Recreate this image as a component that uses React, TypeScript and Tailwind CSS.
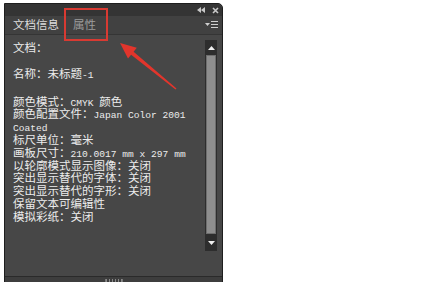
import React from 'react';

// Illustrator-style "文档信息" panel with a red annotation
const cjk = "font-['Noto_Sans_CJK_SC','Noto_Sans_CJK_JP',sans-serif]";
const mono = "font-['Liberation_Mono',monospace] text-[9.6px]";

function Line({ children }: { children: React.ReactNode }) {
  return <div className="h-[12.8px] leading-[12.8px] whitespace-nowrap">{children}</div>;
}

export default function App() {
  return (
    <div className={`relative w-[435px] h-[282px] overflow-hidden bg-white pl-[4px] pt-[3px] ${cjk}`}>
      <div className="flex h-[290px] w-[219px] flex-col rounded-tr-[5px] border border-[#1e1e1e] bg-[#474747]">
        {/* title bar */}
        <div className="flex h-[12px] items-center justify-end gap-[7px] rounded-tr-[5px] bg-[#343434] pr-[3px]">
          <svg width="8" height="6" viewBox="0 0 8 6">
            <path d="M4 0 L0 3 L4 6 Z M8 0 L4 3 L8 6 Z" fill="#c8c8c8" />
          </svg>
          <svg width="7" height="7" viewBox="0 0 7 7">
            <path d="M1 1 L6 6 M6 1 L1 6" stroke="#c8c8c8" strokeWidth="1.6" />
          </svg>
        </div>
        {/* tab row */}
        <div className="flex h-[19px] items-center border-b border-[#353535] bg-[#414141] pl-[8px] pr-[4px] text-[11.5px]">
          <span className="text-[#dcdcdc]">文档信息</span>
          <span className="ml-[14px] text-[#9c9c9c]">属性</span>
          <svg className="ml-auto" width="13" height="8" viewBox="0 0 13 8">
            <path d="M0 2 L5 2 L2.5 5 Z" fill="#d0d0d0" />
            <path d="M6 0.5 H13 M6 3.5 H13 M6 6.5 H13" stroke="#d0d0d0" strokeWidth="1" />
          </svg>
        </div>
        {/* content */}
        <div className="flex h-[242px] border-b border-[#2a2a2a]">
          <div className="flex-1 pl-[8px] pt-[6px] text-[11.5px] text-[#ececec]">
            <Line>文档：</Line>
            <div className="h-[13px]" />
            <Line>
              名称：未标题<span className={mono}>-1</span>
            </Line>
            <div className="h-[15px]" />
            <Line>
              颜色模式：<span className={mono}>CMYK </span>颜色
            </Line>
            <Line>
              颜色配置文件：<span className={mono}>Japan Color 2001</span>
            </Line>
            <Line>
              <span className={mono}>Coated</span>
            </Line>
            <Line>标尺单位：毫米</Line>
            <Line>
              画板尺寸：<span className={mono}>210.0017 mm x 297 mm</span>
            </Line>
            <Line>以轮廓模式显示图像：关闭</Line>
            <Line>突出显示替代的字体：关闭</Line>
            <Line>突出显示替代的字形：关闭</Line>
            <Line>保留文本可编辑性</Line>
            <Line>模拟彩纸：关闭</Line>
          </div>
          {/* scrollbar */}
          <div className="mr-[5px] mt-[5px] flex h-[211px] w-[12px] flex-col bg-[#2d2d2d]">
            <div className="flex h-[15px] items-center justify-center">
              <svg width="7" height="4" viewBox="0 0 7 4">
                <path d="M0 4 L3.5 0 L7 4 Z" fill="#f0f0f0" />
              </svg>
            </div>
            <div className="mx-[1px] flex-1 border border-[#6e6e6e] bg-[#8e8e8e]" />
            <div className="flex h-[17px] items-center justify-center">
              <svg width="7" height="4" viewBox="0 0 7 4">
                <path d="M0 0 L3.5 4 L7 0 Z" fill="#f0f0f0" />
              </svg>
            </div>
          </div>
        </div>
        {/* bottom bar */}
        <div className="flex h-[14px] justify-center bg-[#3d3d3d] pt-[2px]">
          <div className="h-[3px] w-[18px] border-x border-[#777] bg-[repeating-linear-gradient(90deg,#888_0_1px,transparent_1px_3px)]" />
        </div>
      </div>

      {/* annotation: red box around 属性 */}
      <div className="absolute left-[64px] top-[8px] h-[33px] w-[44px] border-2 border-[#d83a32]" />
      {/* annotation: red arrow */}
      <svg className="absolute left-0 top-0" width="435" height="282" viewBox="0 0 435 282">
        <polygon
          points="120,43 136.8,47.8 133.6,51.7 176.5,88.4 175.5,89.6 131.1,54.7 128,58.6"
          fill="#e2352c"
        />
      </svg>
    </div>
  );
}
